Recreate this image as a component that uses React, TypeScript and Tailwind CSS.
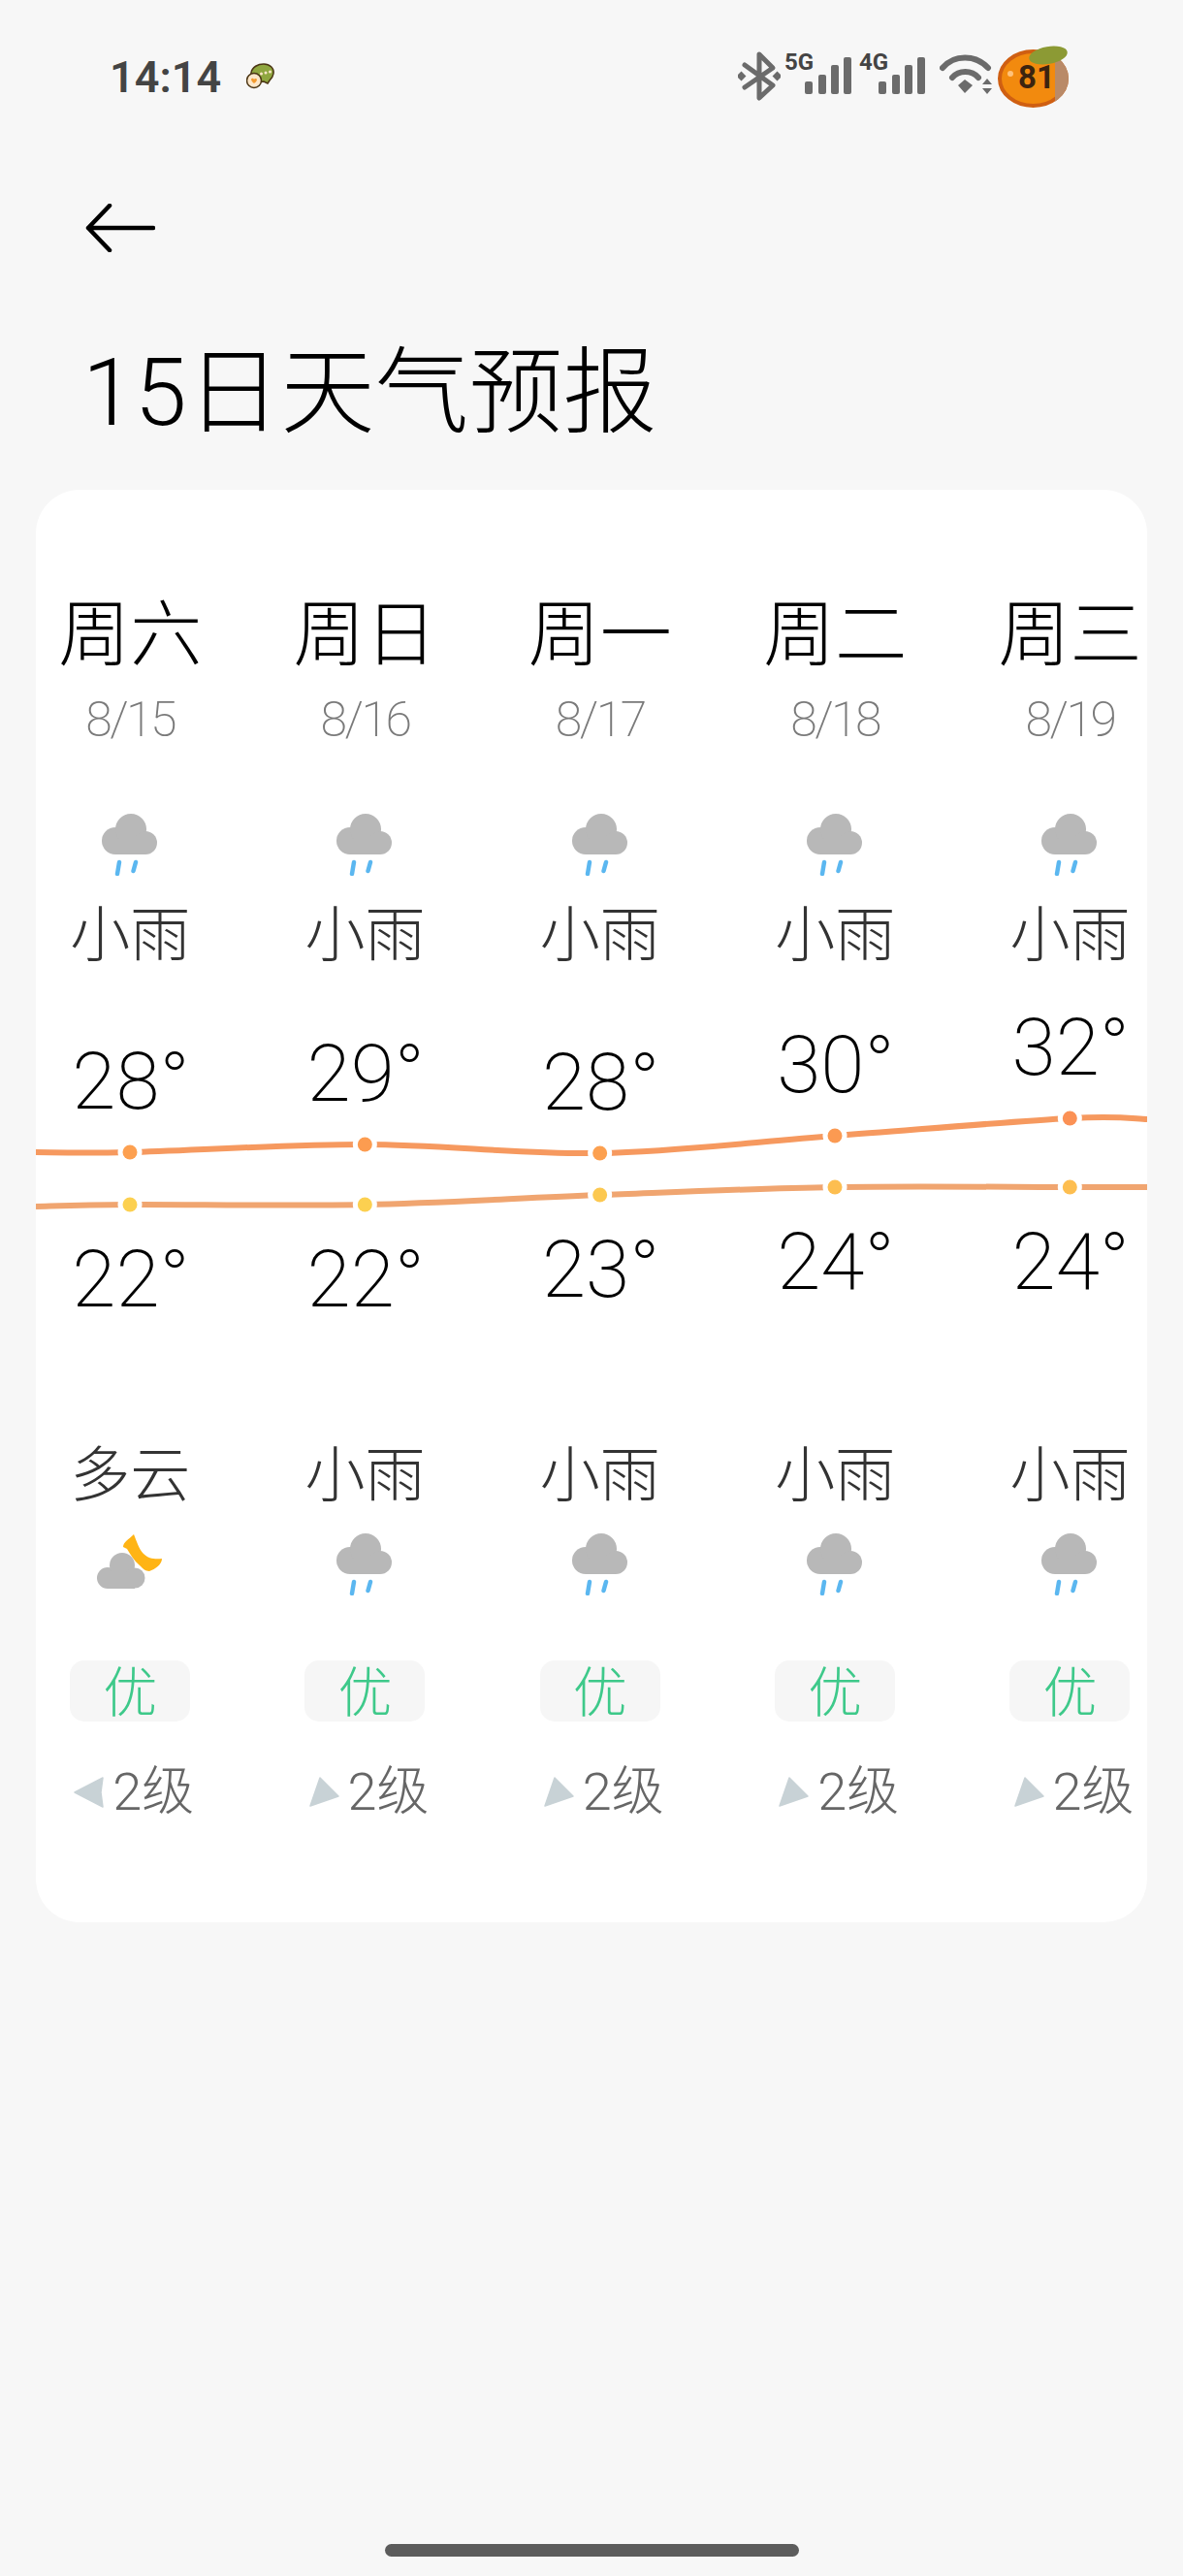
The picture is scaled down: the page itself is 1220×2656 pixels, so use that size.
import React from 'react';

const FONT = "font-['Roboto','Noto_Sans_CJK_SC',sans-serif]";

interface Day {
  week: string;
  date: string;
  dayText: string;
  nightText: string;
  night: 'rain' | 'moon';
  high: number;
  low: number;
  highY: number;
  lowY: number;
  highDot: string;
  lowDot: string;
  wind: 'left' | 'right';
}

const COL_W = 242.33;
const FIRST_X = 97;
const CHART_TOP = 1040;

const DAYS: Day[] = [
  { week: '周六', date: '8/15', dayText: '小雨', nightText: '多云', night: 'moon', high: 28, low: 22, highY: 1188, lowY: 1242, highDot: '#fda050', lowDot: '#fcd050', wind: 'left' },
  { week: '周日', date: '8/16', dayText: '小雨', nightText: '小雨', night: 'rain', high: 29, low: 22, highY: 1180, lowY: 1242, highDot: '#fc9c50', lowDot: '#fcd050', wind: 'right' },
  { week: '周一', date: '8/17', dayText: '小雨', nightText: '小雨', night: 'rain', high: 28, low: 23, highY: 1189, lowY: 1232, highDot: '#fca050', lowDot: '#fcc850', wind: 'right' },
  { week: '周二', date: '8/18', dayText: '小雨', nightText: '小雨', night: 'rain', high: 30, low: 24, highY: 1171, lowY: 1224, highDot: '#fb9a52', lowDot: '#fdbe50', wind: 'right' },
  { week: '周三', date: '8/19', dayText: '小雨', nightText: '小雨', night: 'rain', high: 32, low: 24, highY: 1153, lowY: 1224, highDot: '#fb9155', lowDot: '#fdbe50', wind: 'right' },
];

// catmull-rom through the points, ends run out to the card edges
const curve = (pts: [number, number][]) => {
  let d = `M${pts[0][0]} ${pts[0][1]}`;
  for (let i = 0; i < pts.length - 1; i++) {
    const p0 = pts[Math.max(i - 1, 0)];
    const p1 = pts[i];
    const p2 = pts[i + 1];
    const p3 = pts[Math.min(i + 2, pts.length - 1)];
    const c1x = p1[0] + (p2[0] - p0[0]) / 6;
    const c1y = p1[1] + (p2[1] - p0[1]) / 6;
    const c2x = p2[0] - (p3[0] - p1[0]) / 6;
    const c2y = p2[1] - (p3[1] - p1[1]) / 6;
    d += ` C${c1x} ${c1y} ${c2x} ${c2y} ${p2[0]} ${p2[1]}`;
  }
  return d;
};

const RainIcon = () => (
  <svg width="58" height="64" viewBox="0 0 58 64" className="block">
    <g fill="#b8b8b8">
      <circle cx="14" cy="28" r="14" />
      <circle cx="30" cy="16" r="16" />
      <circle cx="45" cy="30" r="12" />
      <rect x="14" y="26" width="31" height="16" />
    </g>
    <path d="M18 50 L16 62 M35 50 L32.500 59" stroke="#5bb7f0" strokeWidth="4.500" strokeLinecap="round" fill="none" />
  </svg>
);

const MoonIcon = () => (
  <svg width="68" height="58" viewBox="0 0 68 58" className="block">
    <path d="M38 1 C33 6 27 9 27 14 L31 16 C34 21 38 28 44 33 C47 36 50 39 54 39 C60 37 67 32 67 26 C60 27 53 26 48 21 C43 16 41 8 38 1Z" fill="#ffb414" />
    <g fill="#b8b8b8">
      <circle cx="11" cy="46" r="11" />
      <circle cx="26" cy="33" r="13" />
      <circle cx="39" cy="46" r="10.500" />
      <rect x="11" y="40" width="28" height="17" />
    </g>
  </svg>
);

const WindArrow = ({ dir }: { dir: 'left' | 'right' }) => (
  <svg width="31" height="32" viewBox="0 0 31 32" className="block shrink-0">
    {dir === 'left' ? (
      <path d="M1 16 L30 1 L28 16 L30 31Z" fill="#c8d2d6" stroke="#c8d2d6" strokeWidth="1.500" strokeLinejoin="round" />
    ) : (
      <path d="M1 30 L11 1 L30 20Z" fill="#c8d2d6" stroke="#c8d2d6" strokeWidth="1.500" strokeLinejoin="round" />
    )}
  </svg>
);

const Bars = () => (
  <svg width="50" height="60" viewBox="0 0 50 60" className="block">
    <g fill="#6b6b6b">
      <rect x="1" y="34" width="8" height="13" rx="2" />
      <rect x="15" y="27" width="8" height="20" rx="2" />
      <rect x="28" y="17" width="8" height="30" rx="2" />
      <rect x="41" y="9" width="8" height="38" rx="2" />
    </g>
  </svg>
);

const Signal = ({ label, className }: { label: string; className: string }) => (
  <div className={`relative flex justify-end ${className}`}>
    <Bars />
    <span className={`absolute left-0 top-[1px] text-[24px] leading-[26px] font-bold text-[#444444] ${FONT}`}>{label}</span>
  </div>
);

const StatusBar = () => (
  <div className="flex h-[60px] items-center mt-[50px] pl-[113px]">
    <span className={`w-[113px] text-[45px] leading-[60px] font-semibold whitespace-nowrap text-[#444444] ${FONT}`}>14:14</span>
    <svg width="30" height="28" viewBox="0 0 30 28" className="ml-[28px] mt-[-2px]">
      <path d="M5 10 C6 4 12 1 18 1 C24 1 29 5 28 11 C27.500 14 26 16 24 18 L22 21 L18 19 C12 20 4 17 5 10Z" fill="#8fa63f" stroke="#4b3514" strokeWidth="1.500" />
      <circle cx="8" cy="18" r="7.500" fill="#fde7c9" stroke="#4b3514" strokeWidth="1.500" />
      <path d="M5 16.500 C6 15 8 16 8 17 C8.500 16 10.500 15.500 11 17 C11 19 9 20 8 21 C7 20 5 19 5 16.500Z" fill="#f39a2e" />
      <circle cx="15.500" cy="11" r="1.500" fill="#fde7c9" />
      <circle cx="20" cy="10" r="1.500" fill="#fde7c9" />
      <circle cx="24.500" cy="9" r="1.500" fill="#fde7c9" />
    </svg>
    <svg width="44" height="60" viewBox="0 0 44 60" className="ml-[477px]">
      <path d="M7 17 L36 38 L22 51 L22 6 L36 20 L7 40" stroke="#6b6b6b" strokeWidth="5" fill="none" strokeLinejoin="round" strokeLinecap="round" />
      <rect x="0" y="25" width="7" height="7" transform="rotate(45 3.500 28.500)" fill="#6b6b6b" />
      <rect x="37" y="25" width="7" height="7" transform="rotate(45 40.500 28.500)" fill="#6b6b6b" />
    </svg>
    <Signal label="5G" className="ml-[4px] w-[70px]" />
    <Signal label="4G" className="ml-[7px] w-[69px]" />
    <svg width="54" height="60" viewBox="0 0 54 60" className="ml-[14px]">
      <path d="M3 20 C15 6 37 6 50 20" stroke="#6b6b6b" strokeWidth="6" fill="none" strokeLinecap="round" />
      <path d="M13 30 C20 22 33 22 40 30" stroke="#6b6b6b" strokeWidth="6" fill="none" strokeLinecap="round" />
      <path d="M19 38 L26 32 L34 38 L26 46Z" fill="#6b6b6b" />
      <path d="M44 37 L49 31 L54 37Z M44 41 L54 41 L49 47Z" fill="#6b6b6b" />
    </svg>
    <div className="relative ml-[6px] h-[60px] w-[74px] shrink-0">
      <svg width="74" height="60" viewBox="0 0 74 60" className="block overflow-visible">
        <defs>
          <clipPath id="battery-used">
            <rect x="59" y="0" width="15" height="60" />
          </clipPath>
        </defs>
        <ellipse cx="36.500" cy="31" rx="34.500" ry="28" fill="#f28a0e" stroke="#cf5f12" strokeWidth="4" />
        <ellipse cx="36.500" cy="31" rx="36.500" ry="30" fill="#b98a68" clipPath="url(#battery-used)" />
        <circle cx="13" cy="26" r="3" fill="#ffc27a" />
        <ellipse cx="52" cy="7" rx="20" ry="9" transform="rotate(-10 52 7)" fill="#8c9a34" />
      </svg>
      <span className={`absolute left-[21px] top-[8px] text-[33px] leading-[44px] font-bold text-[#3c2410] ${FONT}`}>81</span>
    </div>
  </div>
);

const Chart = () => {
  const highPts: [number, number][] = [[0, 1188 - CHART_TOP]];
  const lowPts: [number, number][] = [[0, 1244 - CHART_TOP]];
  DAYS.forEach((d, i) => {
    highPts.push([FIRST_X + i * COL_W, d.highY - CHART_TOP]);
    lowPts.push([FIRST_X + i * COL_W, d.lowY - CHART_TOP]);
  });
  highPts.push([1146, 1154 - CHART_TOP]);
  lowPts.push([1146, 1224 - CHART_TOP]);

  return (
    <div className="relative mt-[40px] h-[360px]">
      <svg width="1146" height="360" viewBox="0 0 1146 360" className="absolute left-0 top-0">
        <path d={curve(highPts)} stroke="#f6995f" strokeWidth="6" fill="none" />
        <path d={curve(lowPts)} stroke="#f0a570" strokeWidth="6" fill="none" />
        {DAYS.map((d, i) => (
          <g key={d.date}>
            <circle cx={FIRST_X + i * COL_W} cy={d.highY - CHART_TOP} r="12.500" fill="#ffffff" />
            <circle cx={FIRST_X + i * COL_W} cy={d.highY - CHART_TOP} r="7.500" fill={d.highDot} />
            <circle cx={FIRST_X + i * COL_W} cy={d.lowY - CHART_TOP} r="12.500" fill="#ffffff" />
            <circle cx={FIRST_X + i * COL_W} cy={d.lowY - CHART_TOP} r="7.500" fill={d.lowDot} />
          </g>
        ))}
      </svg>
      {DAYS.map((d, i) => (
        <React.Fragment key={d.date}>
          <span
            className="absolute w-[160px] text-center text-[82px] leading-[80px] font-extralight text-black"
            style={{ left: FIRST_X + i * COL_W - 79, top: d.highY - CHART_TOP - 113 }}
          >
            {d.high}°
          </span>
          <span
            className="absolute w-[160px] text-center text-[82px] leading-[80px] font-extralight text-black"
            style={{ left: FIRST_X + i * COL_W - 79, top: d.lowY - CHART_TOP + 37 }}
          >
            {d.low}°
          </span>
        </React.Fragment>
      ))}
    </div>
  );
};

export default function App() {
  return (
    <div className={`flex min-h-[2656px] w-[1220px] flex-col overflow-hidden bg-[#f7f7f7] ${FONT}`}>
      <StatusBar />

      <button type="button" className="ml-[88px] mt-[100px] block h-[50px] w-[72px]">
        <svg width="72" height="50" viewBox="0 0 72 50" className="block">
          <path d="M70 25 H3 M25 2 L3 25 L25 48" stroke="#000000" strokeWidth="4.500" fill="none" strokeLinecap="round" strokeLinejoin="round" />
        </svg>
      </button>

      <h1 className="ml-[85px] mt-[90px] text-[97px] leading-[110px] font-light text-black">15日天气预报</h1>

      <div className="ml-[37px] mt-[45px] h-[1477px] w-[1146px] shrink-0 overflow-hidden rounded-[45px] bg-white">
        <div className="ml-[-24px] flex pt-[110px]">
          {DAYS.map((d) => (
            <div key={d.date} className="flex w-[242.33px] shrink-0 flex-col items-center">
              <div className="text-[74px] leading-[80px] font-light text-black">{d.week}</div>
              <div className="mt-[19px] text-[50px] leading-[56px] font-extralight tracking-[-0.05em] text-[#7a7a7a]">{d.date}</div>
              <div className="mt-[69px]"><RainIcon /></div>
              <div className="mt-[27px] text-[62px] leading-[70px] font-light text-[#333333]">{d.dayText}</div>
            </div>
          ))}
        </div>

        <Chart />

        <div className="ml-[-24px] flex pt-[87px]">
          {DAYS.map((d) => (
            <div key={d.date} className="flex w-[242.33px] shrink-0 flex-col items-center">
              <div className="text-[62px] leading-[70px] font-light text-[#333333]">{d.nightText}</div>
              <div className="mt-[24px] flex h-[64px] items-start">
                {d.night === 'rain' ? <RainIcon /> : <MoonIcon />}
              </div>
              <div className="mt-[67px] flex h-[63px] w-[124px] items-center justify-center rounded-[15px] bg-[#f6f6f6] pt-[5px] text-[56px] leading-[58px] font-light text-[#3ec98a]">优</div>
              <div className="mt-[42px] flex items-center pl-[8px] text-[54px] leading-[62px] font-light text-[#666666]">
                <WindArrow dir={d.wind} />
                <span className="ml-[9px] whitespace-nowrap">2级</span>
              </div>
            </div>
          ))}
        </div>
      </div>

      <div className="mx-auto mt-[641px] h-[13px] w-[427px] shrink-0 rounded-full bg-[#5c5c5c]" />
    </div>
  );
}
